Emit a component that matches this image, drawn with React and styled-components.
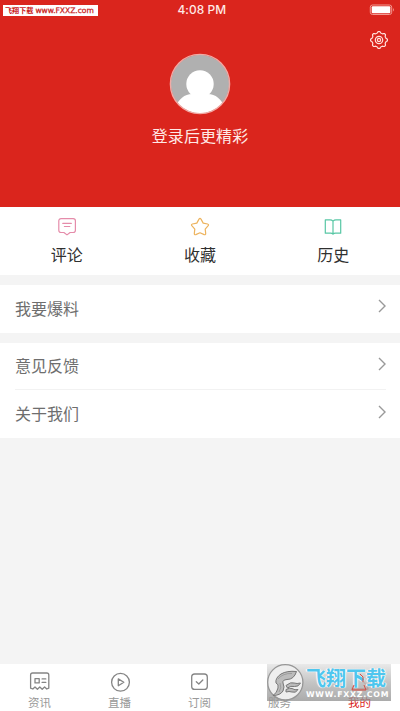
import React from 'react';
import styled, { createGlobalStyle } from 'styled-components';

const GlobalStyle = createGlobalStyle`
  * { box-sizing: border-box; }
  body { margin: 0; background: #f4f4f4; font-family: "Liberation Sans", "Noto Sans CJK SC", sans-serif; }
`;

const Screen = styled.div`
  position: relative;
  display: flex;
  flex-direction: column;
  width: 400px;
  height: 711px;
  overflow: hidden;
  background: #f4f4f4;
`;

const Header = styled.header`
  display: flex;
  flex-direction: column;
  align-items: center;
  height: 207px;
  flex: none;
  background: #da251d;
  color: #fff;
`;

const StatusBar = styled.div`
  display: grid;
  grid-template-columns: 174.5px 1fr 30px;
  align-items: center;
  align-self: stretch;
  height: 20px;
  padding: 0 5px 0 3px;
`;

const SiteTag = styled.div`
  display: flex;
  align-items: center;
  width: 95px;
  height: 11px;
  padding-left: 2px;
  gap: 2px;
  background: #fff;
  color: #c9201a;
  font: 700 7.1px/11px "Noto Sans CJK SC", sans-serif;
  white-space: nowrap;
`;

const SiteUrl = styled.span`
  font: 400 7.6px/11px "DejaVu Sans", sans-serif;
  letter-spacing: -0.05px;
  -webkit-text-stroke: 0.25px #c9201a;
`;

const Clock = styled.time`
  font: 500 11.9px/20px Inter, sans-serif;
  letter-spacing: 0.05px;
  color: #ffe9e6;
`;

const BatteryIcon = styled.svg`
  justify-self: end;
  width: 26px;
  height: 12px;
`;

const Tools = styled.div`
  display: flex;
  justify-content: flex-end;
  align-self: stretch;
  height: 33px;
  padding: 10px 11px 0 0;
`;

const Avatar = styled.svg`
  display: block;
  width: 62px;
  height: 62px;
  flex: none;
`;

const LoginText = styled.div`
  margin-top: 10px;
  font-size: 16px;
  line-height: 24px;
  letter-spacing: 0.1px;
  color: #ffe9e6;
`;

const QuickBar = styled.section`
  display: grid;
  grid-template-columns: repeat(3, 133.3px);
  height: 68px;
  flex: none;
  background: #fff;
`;

const QuickItem = styled.div`
  display: flex;
  flex-direction: column;
  align-items: center;
  padding-top: 9px;
  color: #303030;
  font-size: 16px;
  line-height: 24px;
`;

const QuickIcon = styled.svg`
  width: 22px;
  height: 22px;
  margin-bottom: 6px;
  fill: none;
  stroke: ${(p) => p.$tone};
  stroke-width: 1.2;
  stroke-linejoin: round;
  stroke-linecap: round;
`;

const Group = styled.section`
  display: flex;
  flex-direction: column;
  flex: none;
  margin-top: 10px;
  padding: 0 14px 0 15px;
  background: #fff;
`;

const Row = styled.div`
  display: flex;
  justify-content: space-between;
  height: ${(p) => p.$height}px;
  padding-top: ${(p) => p.$offset}px;
  border-bottom: ${(p) => (p.$divided ? '1px solid #f2f2f2' : 'none')};
  color: #6e6e6e;
  font-size: 16px;
  line-height: 24px;
`;

const Chevron = styled.svg`
  width: 8px;
  height: 14px;
  margin: 1.5px 0 0;
  fill: none;
  stroke: #999;
  stroke-width: 1.4;
`;

const TabBar = styled.nav`
  display: grid;
  grid-template-columns: repeat(5, 80px);
  height: 47px;
  margin-top: auto;
  flex: none;
  background: #fff;
`;

const Tab = styled.div`
  display: flex;
  flex-direction: column;
  align-items: center;
  padding-top: 7px;
  color: ${(p) => (p.$active ? '#da251d' : '#999')};
  font-size: 11.5px;
  line-height: 18px;
`;

const TabIcon = styled.svg`
  width: 22px;
  height: 22px;
  flex: none;
  margin-bottom: 1px;
  fill: none;
  stroke: ${(p) => (p.$active ? '#da251d' : '#858585')};
  stroke-width: 1.3;
  stroke-linejoin: round;
  stroke-linecap: round;
`;

const TabLabel = styled.span`
  margin-right: 1px;
`;

const Watermark = styled.aside`
  position: absolute;
  left: 267px;
  top: 664px;
  display: flex;
  width: 124px;
  height: 37px;
  background: linear-gradient(rgba(232, 232, 232, 0.95), rgba(190, 190, 190, 0.9) 50%, rgba(143, 143, 143, 0.75));
`;

const Emblem = styled.svg`
  width: 39px;
  height: 37px;
  flex: none;
`;

const MarkCopy = styled.div`
  display: flex;
  flex-direction: column;
  width: 85px;
`;

const MarkName = styled.div`
  height: 26px;
  font: 700 20px/28px "Noto Sans CJK SC", sans-serif;
  color: #4fc6ee;
  text-shadow: 0 0 1px #fff, 1px 0 1px #fff, -1px 0 1px #fff;
  white-space: nowrap;
`;

const MarkUrl = styled.div`
  font: 700 7.8px/9px "DejaVu Sans", sans-serif;
  letter-spacing: 0.75px;
  color: #fff;
  white-space: nowrap;
`;

const MarkOverlay = styled.svg`
  position: absolute;
  left: 83px;
  top: 9px;
  width: 18px;
  height: 18px;
  fill: none;
  stroke: #d84b40;
  stroke-width: 1;
`;

// Outline of a cog with eight rounded teeth around (10, 10).
const cogPath = (() => {
  const points = [];
  for (let i = 0; i < 64; i += 1) {
    const a = (i / 64) * Math.PI * 2;
    const wave = Math.cos(a * 8);
    const r = 7.7 + 0.75 * Math.tanh(wave * 2.2);
    points.push(`${(10 + r * Math.cos(a)).toFixed(2)} ${(10 + r * Math.sin(a)).toFixed(2)}`);
  }
  return `M${points.join('L')}Z`;
})();

const quickItems = [
  {
    label: '评论',
    tone: '#e58caa',
    art: <path d="M5 2.6h12.2a2.2 2.2 0 0 1 2.2 2.2v9.5a2.2 2.2 0 0 1-2.2 2.2h-3.1L11 18.9l-3.1-2.4H5a2.2 2.2 0 0 1-2.2-2.2V4.8A2.2 2.2 0 0 1 5 2.6ZM6.8 7.4h8.5M8.4 10.5h5.4" />,
  },
  {
    label: '收藏',
    tone: '#edb35d',
    art: <path d="M10 3.1q1-1.3 2 0l2.2 4 4.4.9q1.5.4.6 1.7l-3 3.4.5 4.5q0 1.5-1.5 1L11 16.8l-4.2 1.8q-1.5.5-1.5-1l.5-4.5-3-3.4q-.9-1.3.6-1.7l4.4-.9Z" />,
  },
  {
    label: '历史',
    tone: '#58c7a5',
    art: <path d="M11 5.2Q9.8 3.9 8 3.9H3.3v13.3H8.5q1.8 0 2.5 1 .7-1 2.5-1h5.2V3.9H14q-1.8 0-3 1.3v12.7" />,
  },
];

const tabs = [
  {
    label: '资讯',
    art: <path d="M1.6 17.2V4q0-2 2-2h14.2q2 0 2 2v13.2l-2 .8-2.2-2-2.4 2.3L10.8 16l-2.4 2.3L6 16 3.8 18ZM6 7.6h4.2v4.3H6ZM13.1 7.9h3.7M13.1 11.4h3.7" />,
  },
  {
    label: '直播',
    art: (
      <>
        <circle cx="11.5" cy="11.3" r="8.9" />
        <path d="m9.3 7.9 5.5 3.4-5.5 3.4Z" />
      </>
    ),
  },
  {
    label: '订阅',
    art: (
      <>
        <rect x="2.7" y="3" width="15.6" height="15.4" rx="3" />
        <path d="m7.3 10.7 2.5 2.3 4-4" />
      </>
    ),
  },
  {
    label: '服务',
    art: <path d="M3 3h6v6H3zM12 3h6v6h-6zM3 12h6v6H3zM12 12h6v6h-6z" />,
  },
  {
    label: '我的',
    active: true,
    art: <path d="M8 11a4 4 0 1 1 6 0M3 18q1-5 5-7M14 11q4 2 5 7H3" />,
  },
];

function MenuRow({ label, height, offset, divided }) {
  return (
    <Row $height={height} $offset={offset} $divided={divided}>
      <span>{label}</span>
      <Chevron viewBox="0 0 8 14">
        <path d="m1 1 6 6-6 6" />
      </Chevron>
    </Row>
  );
}

export default function App() {
  return (
    <>
      <GlobalStyle />
      <Screen>
        <Header>
          <StatusBar>
            <SiteTag>
              飞翔下载<SiteUrl>www.FXXZ.com</SiteUrl>
            </SiteTag>
            <Clock>4:08 PM</Clock>
            <BatteryIcon viewBox="0 0 26 12">
              <rect x="1.3" y="1" width="21.4" height="9.5" rx="2.2" fill="none" stroke="#f39a92" />
              <rect x="2.7" y="2.3" width="18.6" height="7" rx="1" fill="#fff" />
              <path d="M24 4q2 1.8 0 3.5Z" fill="#f08b83" />
            </BatteryIcon>
          </StatusBar>
          <Tools>
            <svg width="20" height="20" viewBox="0 0 20 20" fill="none" stroke="#ffe0dc" strokeWidth="1.2">
              <path d={cogPath} strokeLinejoin="round" />
              <circle cx="10" cy="10" r="3.7" />
              <circle cx="10" cy="10" r="1.6" />
            </svg>
          </Tools>
          <Avatar viewBox="0 0 62 62">
            <defs>
              <clipPath id="avatar-disc">
                <circle cx="31" cy="31" r="29.3" />
              </clipPath>
            </defs>
            <circle cx="31" cy="31" r="29.3" fill="#b0b0b0" />
            <g clipPath="url(#avatar-disc)" fill="#fff">
              <circle cx="31" cy="31" r="13.7" />
              <path d="M5 56Q12 41 23 41h16q11 0 18 15v6H5Z" />
            </g>
            <circle cx="31" cy="31" r="29.6" fill="none" stroke="#f1aaa5" strokeWidth="1.4" />
          </Avatar>
          <LoginText>登录后更精彩</LoginText>
        </Header>

        <QuickBar>
          {quickItems.map((item) => (
            <QuickItem key={item.label}>
              <QuickIcon viewBox="0 0 22 22" $tone={item.tone}>{item.art}</QuickIcon>
              <span>{item.label}</span>
            </QuickItem>
          ))}
        </QuickBar>

        <Group>
          <MenuRow label="我要爆料" height={47.5} offset={12.5} />
        </Group>
        <Group>
          <MenuRow label="意见反馈" height={47.5} offset={12.5} divided />
          <MenuRow label="关于我们" height={48} offset={13} />
        </Group>

        <TabBar>
          {tabs.map((tab) => (
            <Tab key={tab.label} $active={tab.active}>
              <TabIcon viewBox="0 0 22 22" $active={tab.active}>{tab.art}</TabIcon>
              <TabLabel>{tab.label}</TabLabel>
            </Tab>
          ))}
        </TabBar>

        <Watermark>
          <Emblem viewBox="0 0 39 37">
            <circle cx="18.3" cy="18.3" r="17.6" fill="#eee" stroke="#969696" strokeWidth="1.3" />
            <g fill="#bcbcbc" stroke="#777" strokeWidth="1" strokeLinejoin="round">
              <path d="M29.5 7.5Q20 6.500 14 10 8 14 9 19q3 1 2 5-1 5-5 7.500 7 0 10-4.500 2-4 0-8-1-3 4-3.500 7 0 9.500-8Z" />
              <path d="M19 21.500q5-4 8-2.500 3 1 6.500 0-2 4-6 3.500-4-1-7 1.500Z" />
              <path d="M19 25.500q4-2 6-1 3 2 6 1-2 4-6 2.500-3-1-6 0Z" />
            </g>
            <path d="M11 15q5-6 14-5.500M13 19q2 5-1 9" fill="none" stroke="#888" strokeWidth=".6" />
          </Emblem>
          <MarkCopy>
            <MarkName>飞翔下载</MarkName>
            <MarkUrl>WWW.FXXZ.COM</MarkUrl>
          </MarkCopy>
          <MarkOverlay viewBox="0 0 18 18">
            <path d="m10 1 3 3v5M4 12l-2 5h14l-2-5" />
          </MarkOverlay>
        </Watermark>
      </Screen>
    </>
  );
}
